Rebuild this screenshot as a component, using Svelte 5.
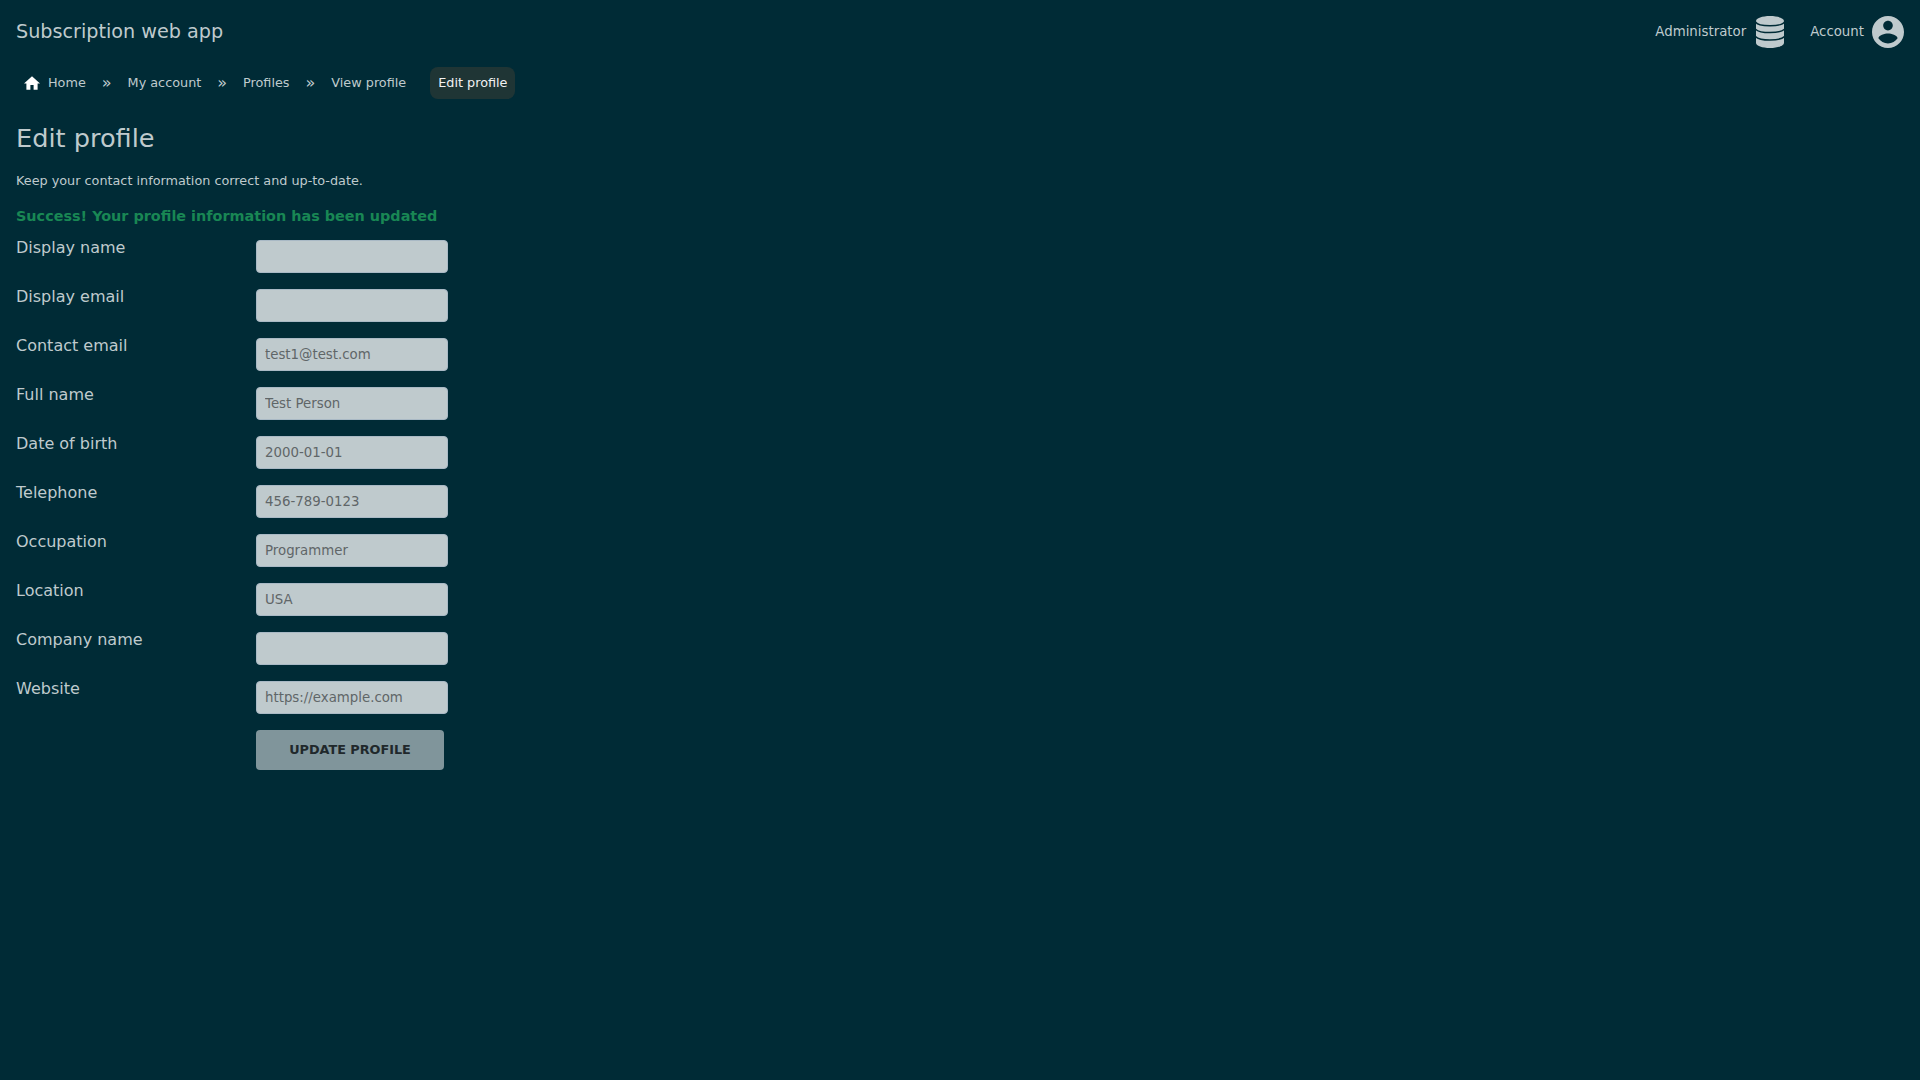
<script>
  const crumbs = ['My account', 'Profiles', 'View profile'];
  const fields = [
    ['Display name', '', 'displayName'],
    ['Display email', '', 'displayEmail'],
    ['Contact email', 'test1@test.com', 'contactEmail'],
    ['Full name', 'Test Person', 'fullName'],
    ['Date of birth', '2000-01-01', 'dob'],
    ['Telephone', '456-789-0123', 'telephone'],
    ['Occupation', 'Programmer', 'occupation'],
    ['Location', 'USA', 'location'],
    ['Company name', '', 'company'],
    ['Website', 'https://example.com', 'website']
  ];
</script>

<header>
  <span class="brand">Subscription web app</span>
  <nav class="tools">
    <a href="#admin">Administrator
      <svg viewBox="0 0 32 32" width="32" height="32">
        <path d="M2 5C2 2.200 8.300 0 16 0s14 2.200 14 5v22c0 2.800-6.300 5-14 5S2 29.800 2 27z" />
        <path class="gap" d="M1.500 5.800C3 8.600 9 9.700 16 9.700S29 8.600 30.500 5.800M1.500 13.200C4 15.600 9.500 16.600 16 16.600S28 15.600 30.500 13.200M1.500 20.600C4 23 9.500 24 16 24S28 23 30.500 20.600" />
      </svg>
    </a>
    <a href="#account">Account
      <svg viewBox="2 2 20 20" width="32" height="32">
        <path d="M12 2C6.480 2 2 6.480 2 12s4.480 10 10 10 10-4.480 10-10S17.520 2 12 2zm0 3c1.660 0 3 1.340 3 3s-1.340 3-3 3-3-1.340-3-3 1.340-3 3-3zm0 14.200c-2.500 0-4.710-1.280-6-3.220.03-1.990 4-3.080 6-3.080 1.990 0 5.970 1.090 6 3.080-1.290 1.940-3.500 3.220-6 3.220z" />
      </svg>
    </a>
  </nav>
</header>

<nav class="crumbs">
  <a href="#home">
    <svg class="home" viewBox="2 1.500 20 20" width="16" height="16"><path d="M10 20v-6h4v6h5v-8h3L12 3 2 12h3v8z" /></svg>Home</a>
  {#each crumbs as crumb}
    <span class="sep">»</span><a href="#crumb">{crumb}</a>
  {/each}
  <span class="current">Edit profile</span>
</nav>

<main>
  <h1>Edit profile</h1>
  <p class="intro">Keep your contact information correct and up-to-date.</p>
  <p class="success">Success! Your profile information has been updated</p>
  <form>
    {#each fields as [label, hint, id]}
      <label for={id}>{label}</label>
      <input {id} type="text" placeholder={hint} />
    {/each}
    <button type="button">UPDATE PROFILE</button>
  </form>
</main>

<style>
  :global(body) {
    background: #002b36;
    color: #bfcacd;
    font: 16px/1.2 "DejaVu Sans", sans-serif;
  }
  :global(#app) { min-height: 100vh; }
  a { color: inherit; text-decoration: none; }
  svg { display: block; fill: #bfcacd; flex: none; }
  .gap { fill: none; stroke: #002b36; stroke-width: 1.5; }
  header {
    display: flex;
    justify-content: space-between;
    align-items: center;
    height: 64px;
    padding: 0 16px;
    box-sizing: border-box;
  }
  .brand { font-size: 19.2px; }
  .tools { display: flex; gap: 24px; font-size: 13.333px; }
  .tools a { display: flex; align-items: center; gap: 8px; }
  .crumbs {
    display: flex;
    align-items: center;
    height: 32px;
    margin-top: 3px;
    padding: 0 16px;
    font-size: 12.8px;
  }
  .crumbs a { display: flex; align-items: center; gap: 8px; padding: 0 8px; }
  .crumbs .home { fill: #fff; }
  .sep { margin: 0 8px; font-size: 16px; }
  .current {
    margin-left: 16px;
    padding: 0 8px;
    line-height: 32px;
    border-radius: 8px;
    background: #1f3535;
    color: #f2f2f2;
  }
  main { padding: 0 16px; }
  h1 { margin: 23px 0 0; font-size: 25.6px; font-weight: 400; line-height: 32px; }
  .intro { margin: 17px 0 0; font-size: 12.8px; line-height: 20px; }
  .success { margin: 15px 0 0; font-size: 14.4px; font-weight: 700; line-height: 20px; color: #198754; }
  form {
    display: grid;
    grid-template-columns: 240px 192px;
    row-gap: 16px;
    margin-top: 14px;
  }
  label { height: 33px; line-height: 16px; }
  input {
    width: 192px;
    height: 33px;
    box-sizing: border-box;
    padding: 0 8px;
    border: 1px solid #a9b9c5;
    border-radius: 4px;
    background: #bfcacd;
    font: 13.333px "DejaVu Sans", sans-serif;
  }
  input::placeholder { color: #5f6668; opacity: 1; }
  button {
    grid-column: 2;
    width: 188px;
    height: 40px;
    padding: 0 0 2px;
    border: 0;
    border-radius: 4px;
    background: #80959b;
    color: #20282b;
    font: 700 12.8px "DejaVu Sans", sans-serif;
  }
</style>
